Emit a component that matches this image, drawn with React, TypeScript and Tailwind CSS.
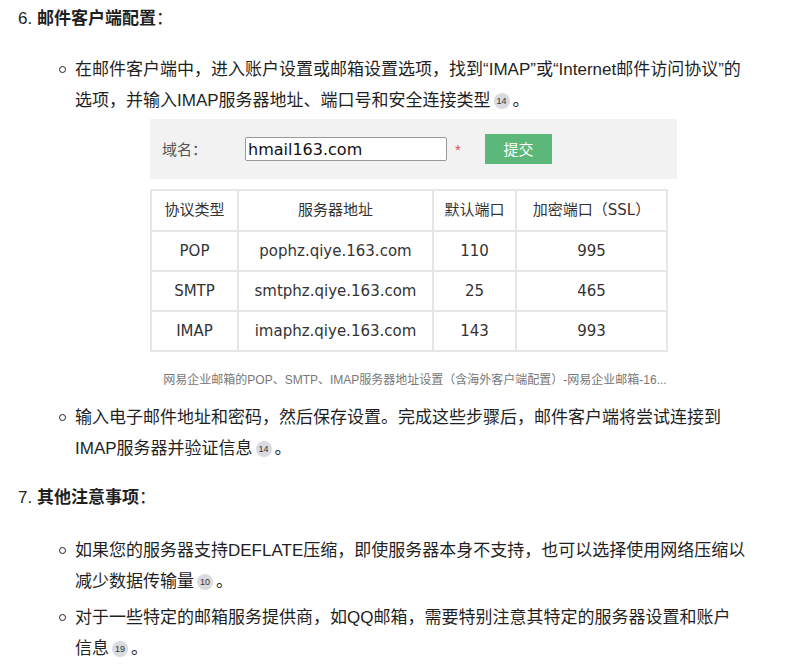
import React from "react";

const Badge = ({ n }: { n: string }) => (
  <span className="inline-flex items-center justify-center w-[16px] h-[16px] leading-[16px] rounded-full bg-[#d9dbe0] text-[9px] text-[#333] align-middle mx-[3px] relative -top-[1px]">{n}</span>
);

const Bullet = ({ children }: { children: React.ReactNode }) => (
  <div className="flex">
    <span className="w-[17px] shrink-0 pt-[12px]"><span className="block w-[7px] h-[7px] rounded-full border border-[#222] ml-[1px]" /></span>
    <div className="w-[672px]">{children}</div>
  </div>
);

export default function App() {
  const rows = [
    ["POP", "pophz.qiye.163.com", "110", "995"],
    ["SMTP", "smtphz.qiye.163.com", "25", "465"],
    ["IMAP", "imaphz.qiye.163.com", "143", "993"],
  ];
  return (
    <div className="w-[786px] h-[666px] bg-white text-[#1f1f1f] text-[17px] leading-[31px] overflow-hidden" style={{ fontFamily: '"Liberation Sans", Arial, "Noto Sans CJK SC", sans-serif' }}>
      <div className="pl-[18px] pt-[3px]">
        <div>6. <b>邮件客户端配置</b>：</div>
        <div className="pl-[40px] mt-[20px]">
          <Bullet>
            在邮件客户端中，进入账户设置或邮箱设置选项，找到“IMAP”或“Internet邮件访问协议”的选项，并输入IMAP服务器地址、端口号和安全连接类型<Badge n="14" />。
          </Bullet>
          <div className="ml-[92px] mt-[3px] w-[527px]">
            <div className="bg-[#f2f2f2] h-[60px] flex items-center text-[15px] text-[#555]">
              <span className="ml-[12px] w-[83px]">域名：</span>
              <div className="w-[202px] h-[24px] border border-[#999] rounded-[2px] bg-white flex items-center px-[2px] text-[16px] text-[#111]" style={{ fontFamily: "Verdana, 'DejaVu Sans', sans-serif" }}>hmail163.com</div>
              <span className="text-[#d9534f] ml-[8px] w-[30px]">*</span>
              <div className="w-[67px] h-[30px] bg-[#5cb87a] text-white flex items-center justify-center">提交</div>
            </div>
            <table className="mt-[10px] border-collapse text-[15px] text-[#333] w-[518px] text-center" style={{ fontFamily: "Verdana, 'DejaVu Sans', 'Noto Sans CJK SC', sans-serif" }}>
              <tbody>
                <tr className="h-[41px]">
                  <td className="border-2 border-[#e6e6e6] w-[87px]">协议类型</td>
                  <td className="border-2 border-[#e6e6e6] w-[195px]">服务器地址</td>
                  <td className="border-2 border-[#e6e6e6] w-[83px]">默认端口</td>
                  <td className="border-2 border-[#e6e6e6]">加密端口（SSL）</td>
                </tr>
                {rows.map((r) => (
                  <tr key={r[0]} className="h-[40px]">
                    {r.map((c, i) => <td key={i} className="border-2 border-[#e6e6e6]">{c}</td>)}
                  </tr>
                ))}
              </tbody>
            </table>
            <div className="text-[12px] text-[#777] text-center mt-[18px] -ml-[40px] w-[610px] leading-[20px]">网易企业邮箱的POP、SMTP、IMAP服务器地址设置（含海外客户端配置）-网易企业邮箱-16...</div>
          </div>
          <div className="mt-[12px]">
            <Bullet>
              输入电子邮件地址和密码，然后保存设置。完成这些步骤后，邮件客户端将尝试连接到IMAP服务器并验证信息<Badge n="14" />。
            </Bullet>
          </div>
        </div>
        <div className="mt-[18px]">7. <b>其他注意事项</b>：</div>
        <div className="pl-[40px] mt-[22px] space-y-[5px]">
          <Bullet>如果您的服务器支持DEFLATE压缩，即使服务器本身不支持，也可以选择使用网络压缩以减少数据传输量<Badge n="10" />。</Bullet>
          <Bullet>对于一些特定的邮箱服务提供商，如QQ邮箱，需要特别注意其特定的服务器设置和账户信息<Badge n="19" />。</Bullet>
        </div>
      </div>
    </div>
  );
}
